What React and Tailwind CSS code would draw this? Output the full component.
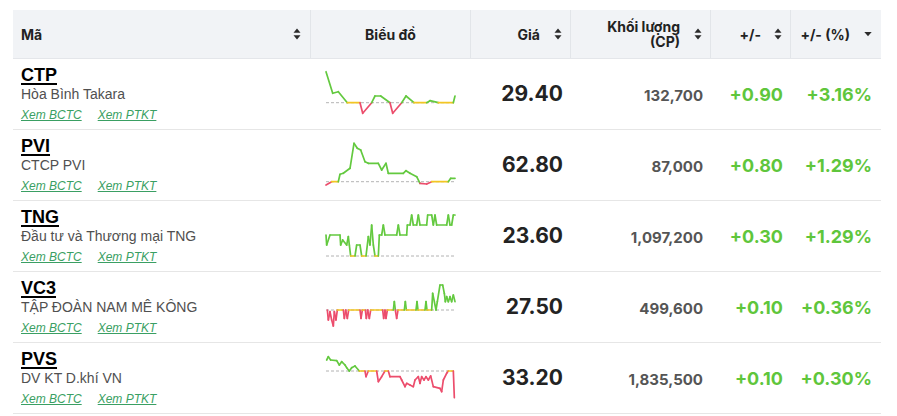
const GREEN = "#63c93f";
const RED = "#ec4d6c";
const YELLOW = "#f3c623";

const rows = [
  {
    code: "CTP",
    name: "Hòa Bình Takara",
    price: "29.40",
    vol: "132,700",
    chg: "+0.90",
    pct: "+3.16%",
    base: 38.7,
    pts: [
      [2, 7.7], [8.7, 29.3], [14.3, 27.7], [23.3, 38.7], [36, 38.7], [38.7, 49.3],
      [47.7, 38.7], [51, 32], [56.7, 32], [66, 38.7], [68.7, 49.3], [77.7, 38.7],
      [82, 32], [90, 38.7], [102.7, 38.7], [106, 36.7], [114.3, 38.7], [129.3, 38.7],
      [131, 32],
    ],
  },
  {
    code: "PVI",
    name: "CTCP PVI",
    price: "62.80",
    vol: "87,000",
    chg: "+0.80",
    pct: "+1.29%",
    base: 46.7,
    pts: [
      [2, 50], [7.7, 46.7], [14.3, 46.7], [16, 39.3], [19.3, 38.3], [26, 33.3],
      [30, 8.3], [33.3, 13.3], [36.7, 15], [41, 26.7], [44.3, 28.3], [54.3, 28.3],
      [57.7, 35], [62, 28.3], [64.3, 38.3], [79.3, 38.3], [82, 35.7], [86, 38.3],
      [92.7, 41.7], [96, 48.3], [102.7, 49], [107.7, 46.7], [124.3, 46.7],
      [126.7, 43.3], [131, 43.3],
    ],
  },
  {
    code: "TNG",
    name: "Đầu tư và Thương mại TNG",
    price: "23.60",
    vol: "1,097,200",
    chg: "+0.30",
    pct: "+1.29%",
    base: 50,
    raw: [
      [78, 315], [80, 345], [90, 315], [120, 315], [122, 345], [128, 330], [140, 345],
      [145, 320], [148, 345], [152, 378], [165, 378], [170, 345], [180, 345], [185, 378],
      [198, 378], [205, 320], [210, 345], [215, 285], [220, 345], [225, 378], [235, 378],
      [238, 315], [245, 315], [250, 285], [255, 315], [290, 315], [295, 285], [300, 315],
      [320, 315], [322, 285], [330, 285], [335, 255], [340, 285], [350, 285], [355, 255],
      [360, 285], [380, 285], [383, 255], [395, 255], [400, 285], [405, 255], [410, 285],
      [440, 285], [445, 255], [450, 285], [455, 285], [460, 255], [465, 255],
    ],
    oy: 76,
  },
  {
    code: "VC3",
    name: "TẬP ĐOÀN NAM MÊ KÔNG",
    price: "27.50",
    vol: "499,600",
    chg: "+0.10",
    pct: "+0.36%",
    base: 33,
    raw: [
      [82, 120], [85, 150], [90, 125], [95, 150], [100, 168], [103, 125], [108, 150],
      [112, 120], [130, 120], [133, 145], [137, 120], [142, 145], [146, 120], [180, 120],
      [183, 145], [187, 120], [196, 120], [199, 145], [203, 120], [208, 145], [212, 120],
      [248, 120], [251, 145], [255, 120], [258, 145], [262, 120], [280, 120], [283, 95],
      [286, 120], [290, 145], [294, 120], [313, 120], [316, 95], [319, 120], [348, 120],
      [351, 95], [354, 120], [375, 120], [378, 95], [381, 120], [395, 120], [398, 70],
      [408, 120], [412, 95], [420, 45], [428, 45], [433, 70], [436, 95], [440, 80],
      [445, 95], [450, 80], [455, 95], [460, 75], [465, 95],
    ],
    oy: 7,
  },
  {
    code: "PVS",
    name: "DV KT D.khí VN",
    price: "33.20",
    vol: "1,835,500",
    chg: "+0.10",
    pct: "+0.30%",
    base: 23,
    raw: [
      [80, 270], [85, 260], [92, 270], [110, 272], [118, 285], [125, 275], [135, 285],
      [140, 293], [148, 303], [155, 293], [165, 288], [178, 303], [195, 303], [198, 320],
      [205, 303], [230, 303], [235, 335], [245, 320], [255, 303], [265, 303], [270, 320],
      [300, 320], [305, 330], [315, 350], [320, 340], [330, 345], [340, 350], [345, 330],
      [355, 320], [360, 340], [365, 320], [372, 330], [378, 320], [385, 330], [392, 318],
      [400, 350], [420, 355], [425, 365], [430, 330], [440, 310], [445, 303], [460, 303],
      [463, 383],
    ],
    oy: 78,
  },
];

function points(r) {
  if (r.pts) return r.pts;
  return r.raw.map(([x, y]) => [x / 3 - 24, y / 3 - r.oy]);
}

function Spark({ r }) {
  const p = points(r);
  const segs = [];
  for (let i = 0; i < p.length - 1; i++) {
    const a = p[i];
    const b = p[i + 1];
    const mid = (a[1] + b[1]) / 2;
    let c = YELLOW;
    if (Math.abs(a[1] - r.base) < 0.6 && Math.abs(b[1] - r.base) < 0.6) c = YELLOW;
    else if (mid < r.base) c = GREEN;
    else c = RED;
    segs.push(
      <line key={i} x1={a[0]} y1={a[1]} x2={b[0]} y2={b[1]} stroke={c} strokeWidth="1.7" strokeLinecap="round" />
    );
  }
  return (
    <svg width="134" height="56" viewBox="0 0 134 56">
      <line x1="2" y1={r.base} x2="132" y2={r.base} stroke="#a0a0a0" strokeWidth="0.8" strokeDasharray="3 2" />
      {segs}
    </svg>
  );
}

function SortIcon() {
  return (
    <svg width="8" height="12" viewBox="0 0 8 12" className="shrink-0">
      <path d="M4 0.5 L7.5 4.8 L0.5 4.8 Z" fill="#2b2b2b" />
      <path d="M4 11.5 L7.5 7.2 L0.5 7.2 Z" fill="#2b2b2b" />
    </svg>
  );
}

function DownIcon() {
  return (
    <svg width="8" height="12" viewBox="0 0 8 12" className="shrink-0">
      <path d="M0.3 4 L7.7 4 L4 8.2 Z" fill="#2b2b2b" />
    </svg>
  );
}

const cols = "grid grid-cols-[298px_160px_100px_140px_80px_90px]";
const inter = { fontFamily: "Inter, 'Noto Sans', sans-serif" };

export default function App() {
  return (
    <div className="bg-white w-[897px] h-[416px] overflow-hidden px-[13px] pt-[10px]">
      <div className="w-[868px]">
        <div
          className={`${cols} h-[49px] bg-[#f1f3f6] border-b border-[#e4e6ea] text-[14px] font-bold text-[#222]`}
          style={inter}
        >
          <div className="flex items-center justify-between pl-[8px] pr-[9px] border-r border-[#e2e5e9]">
            <span>Mã</span>
            <SortIcon />
          </div>
          <div className="flex items-center justify-center border-r border-[#e2e5e9]">Biểu đồ</div>
          <div className="flex items-center justify-end gap-[14px] pr-[8px] border-r border-[#e2e5e9]">
            <span>Giá</span>
            <SortIcon />
          </div>
          <div className="flex items-center justify-end gap-[14px] pr-[8px] border-r border-[#e2e5e9]">
            <span className="text-right leading-[15px]">
              Khối lượng
              <br />
              (CP)
            </span>
            <SortIcon />
          </div>
          <div className="flex items-center justify-end gap-[13px] pr-[8px] border-r border-[#e2e5e9]">
            <span>+/-</span>
            <SortIcon />
          </div>
          <div className="flex items-center justify-end gap-[14px] pr-[9px]">
            <span>+/- (%)</span>
            <DownIcon />
          </div>
        </div>

        {rows.map((r) => (
          <div key={r.code} className={`${cols} h-[71px] border-b border-[#e6e6e6]`}>
            <div className="pl-[8px] pt-[7px]" style={{ fontFamily: "'Liberation Sans', Arial, sans-serif" }}>
              <div className="text-[18px] leading-[18px] font-bold text-black underline underline-offset-[2px] decoration-[1.5px]">
                {r.code}
              </div>
              <div className="text-[14px] leading-[18px] text-[#505050] mt-[1px]">{r.name}</div>
              <div className="flex gap-[16px] mt-[4px] text-[12px] leading-[16px] italic text-[#3a9f63] underline">
                <span>Xem BCTC</span>
                <span>Xem PTKT</span>
              </div>
            </div>
            <div className="flex items-start justify-center pt-[5px]">
              <Spark r={r} />
            </div>
            <div className="flex items-center justify-end pr-[8px] text-[21px] font-bold text-[#232323]" style={inter}>
              {r.price}
            </div>
            <div className="flex items-center justify-end pr-[8px] pt-[4px] text-[15px] font-bold text-[#555]" style={inter}>
              {r.vol}
            </div>
            <div className="flex items-center justify-end pr-[8px] text-[18px] font-bold text-[#5fc63c]" style={inter}>
              {r.chg}
            </div>
            <div className="flex items-center justify-end pr-[9px] text-[18px] font-bold text-[#5fc63c]" style={inter}>
              {r.pct}
            </div>
          </div>
        ))}
      </div>
    </div>
  );
}
